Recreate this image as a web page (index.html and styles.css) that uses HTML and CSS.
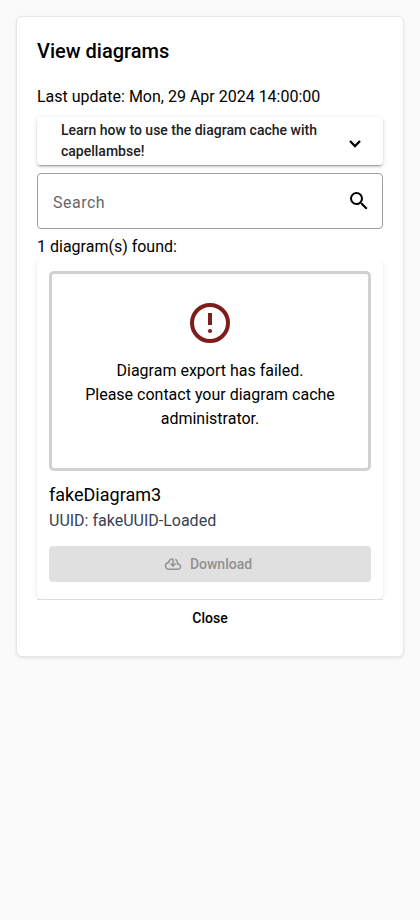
FILE: index.html
```html
<!DOCTYPE html>
<html lang="en">
<head>
<meta charset="utf-8">
<title>View diagrams</title>
<link rel="stylesheet" href="styles.css">
</head>
<body>
<main class="dialog">
  <h2 class="title">View diagrams</h2>
  <p class="updated">Last update: Mon, 29 Apr 2024 14:00:00</p>
  <div class="panel">
    <span class="panel-title">Learn how to use the diagram cache with capellambse!</span>
    <svg class="chevron" viewBox="0 0 24 24"><path d="m7 10 5 5 5-5" fill="none" stroke="currentColor" stroke-width="2.3"/></svg>
  </div>
  <div class="search">
    <span class="placeholder">Search</span>
    <svg class="icon" viewBox="0 0 24 24"><path d="M15.5 14h-.79l-.28-.27A6.471 6.471 0 0 0 16 9.5 6.5 6.5 0 1 0 9.5 16c1.61 0 3.09-.59 4.23-1.57l.27.28v.79l5 4.99L20.49 19l-4.99-5zm-6 0C7.01 14 5 11.99 5 9.5S7.01 5 9.5 5 14 7.01 14 9.5 11.99 14 9.5 14z"/></svg>
  </div>
  <p class="found">1 diagram(s) found:</p>
  <article class="card">
    <div class="failure">
      <svg class="error" viewBox="0 0 48 48"><circle cx="24" cy="24" r="18" fill="none" stroke="currentColor" stroke-width="4"/><path d="M22 14h4v12h-4z"/><circle cx="24" cy="32" r="2.1"/></svg>
      <div>Diagram export has failed.<br>Please contact your diagram cache administrator.</div>
    </div>
    <div class="name">fakeDiagram3</div>
    <div class="uuid">UUID: fakeUUID-Loaded</div>
    <button class="download" disabled>
      <svg class="cloud" viewBox="0 0 24 24"><path d="M6.5 20q-2.28 0-3.89-1.57Q1 16.85 1 14.58q0-1.95 1.17-3.48 1.18-1.53 3.08-1.95.43-1.8 2.13-3.37T11 4.2q.82 0 1.41.54.59.54.59 1.36v6.1l1.6-1.55L16 12l-4 4-4-4 1.4-1.35 1.6 1.55V6.1Q9.1 6.45 8.05 7.94 7 9.43 7 11h-.5q-1.45 0-2.47 1.03Q3 13.05 3 14.5t1.03 2.48Q5.05 18 6.5 18h12q1.05 0 1.78-.72.72-.73.72-1.78t-.72-1.77Q19.55 13 18.5 13H17v-2q0-1.2-.55-2.24-.55-1.04-1.45-1.76V4.68q1.85.87 2.93 2.58Q19 9 19 11q1.73.2 2.86 1.5Q23 13.78 23 15.5q0 1.88-1.31 3.19T18.5 20z"/></svg>
      <span>Download</span>
    </button>
  </article>
  <button class="close">Close</button>
</main>
</body>
</html>
```
FILE: styles.css
```css
* { box-sizing: border-box; }
body { margin: 0; padding: 16px; background: #fafafa; color: #000; font: 400 16px/24px Roboto, sans-serif; }
p, h2 { margin: 0; }
svg { flex: none; fill: currentColor; }
.dialog { height: 641px; padding: 18px 20px; background: #fff; border: 1px solid #e5e7eb; border-radius: 6px; box-shadow: 0 1px 3px rgba(0,0,0,.1); }
.title { font-size: 20px; line-height: 32px; font-weight: 500; }
.updated { margin-top: 18px; }
.panel { display: flex; align-items: center; justify-content: space-between; height: 48px; margin-top: 8px; padding: 0 16px 0 24px; border-radius: 4px; box-shadow: 0 3px 1px -2px rgba(0,0,0,.2), 0 2px 2px rgba(0,0,0,.14), 0 1px 5px rgba(0,0,0,.12); }
.panel-title { width: 270px; font-size: 14px; line-height: 21px; font-weight: 500; color: #212121; }
.chevron { width: 24px; height: 24px; margin-top: 3px; }
.search { display: flex; align-items: center; justify-content: space-between; height: 56px; margin-top: 8px; padding: 0 11px 0 15px; border: 1px solid #9e9e9e; border-radius: 4px; color: #666; letter-spacing: .5px; }
.placeholder { padding-top: 3px; }
.icon { width: 24px; height: 24px; color: #000; }
.found { margin-top: 6px; }
.card { height: 340px; padding: 12px; border-radius: 6px; box-shadow: 0 1px 5px rgba(0,0,0,.1); clip-path: inset(0 -6px 0 -6px); }
.failure { display: flex; flex-direction: column; align-items: center; height: 200px; padding: 25px 24px; border: 3px solid #d1d1d1; border-radius: 5px; text-align: center; }
.error { width: 48px; height: 48px; margin-bottom: 12px; color: #7f1d1d; }
.name { margin-top: 10px; font-size: 18px; line-height: 28px; }
.uuid { color: #374151; }
.download { display: flex; align-items: center; justify-content: center; gap: 8px; width: 100%; height: 36px; margin-top: 13px; padding: 0 10px 0 6px; border: 0; border-radius: 4px; background: #e0e0e0; color: #919191; font: 500 14px Roboto, sans-serif; }
.cloud { width: 18px; height: 18px; }
.close { display: block; width: 100%; height: 37px; border: 0; border-top: 1px solid #dfdfdf; background: none; color: #000; font: 500 14px Roboto, sans-serif; }
```
